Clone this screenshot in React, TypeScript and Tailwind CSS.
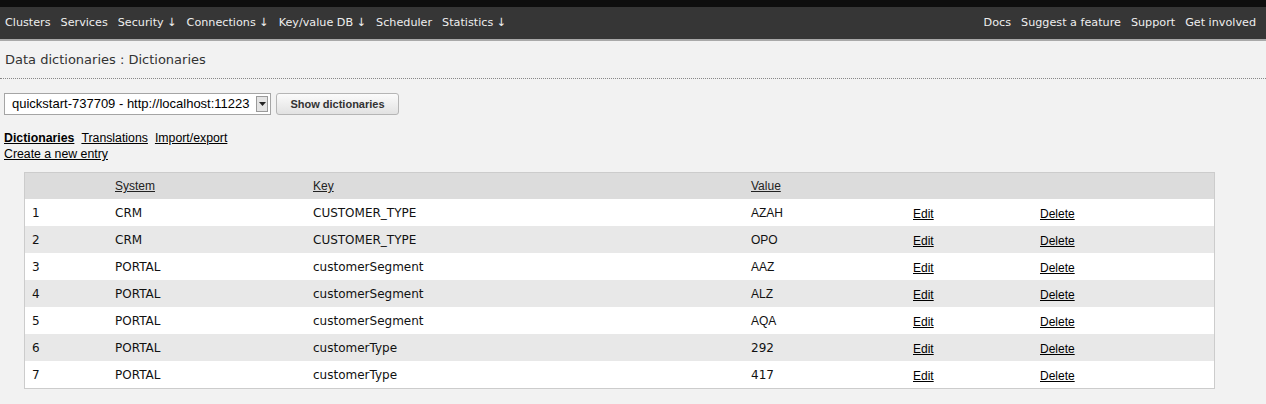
import React from "react";

const dv = { fontFamily: '"DejaVu Sans", sans-serif' };
const ar = { fontFamily: '"Liberation Sans", Arial, sans-serif' };

const rows: [string, string, string, string, boolean][] = [
  ["1", "CRM", "CUSTOMER_TYPE", "AZAH", false],
  ["2", "CRM", "CUSTOMER_TYPE", "OPO", false],
  ["3", "PORTAL", "customerSegment", "AAZ", false],
  ["4", "PORTAL", "customerSegment", "ALZ", false],
  ["5", "PORTAL", "customerSegment", "AQA", false],
  ["6", "PORTAL", "customerType", "292", true],
  ["7", "PORTAL", "customerType", "417", true],
];

export default function App() {
  const left = ["Clusters", "Services", "Security ↓", "Connections ↓", "Key/value DB ↓", "Scheduler", "Statistics ↓"];
  const right = ["Docs", "Suggest a feature", "Support", "Get involved"];
  return (
    <div className="w-[1266px] h-[404px] bg-[#f2f2f2] overflow-hidden text-[#111]">
      <div className="h-[7px] bg-[#0e0e0e]" />
      <div className="h-[34px] bg-[#363636] border-b-2 border-[#a9a9a9] flex items-center justify-between px-[5px] pt-[1px] text-[11.2px] text-[#eeeeee]" style={dv}>
        <div className="flex gap-[10px]">
          {left.map((t) => (
            <span key={t}>{t}</span>
          ))}
        </div>
        <div className="flex gap-[10px] pr-[5px]">
          {right.map((t) => (
            <span key={t}>{t}</span>
          ))}
        </div>
      </div>
      <div className="h-[37px] flex items-center px-[5px] text-[13px] text-[#333]" style={dv}>
        Data dictionaries : Dictionaries
      </div>
      <div className="border-t border-dotted border-[#888] h-0" />
      <div className="flex items-center gap-[5px] pl-[4px] mt-[14px]">
        <div className="w-[267px] h-[22px] bg-white border border-[#a5a5a5] flex items-center justify-between pl-[7px] pr-[2px] text-[13px] text-black" style={ar}>
          <span>quickstart-737709 - http://localhost:11223</span>
          <div className="w-[12px] h-[16px] bg-[#e4e4e4] border border-[#9a9a9a] flex items-center justify-center">
            <svg width="7" height="4" viewBox="0 0 7 4"><path d="M0 0h7L3.5 4z" fill="#222" /></svg>
          </div>
        </div>
        <button className="w-[123px] h-[22px] rounded-[3px] border border-[#b5b5b5] bg-gradient-to-b from-[#fbfbfb] to-[#e2e2e2] text-[11px] font-bold text-[#333]" style={ar}>
          Show dictionaries
        </button>
      </div>
      <div className="pl-[4px] mt-[15px] text-[12.3px] leading-[16px]" style={ar}>
        <div className="flex gap-[7px]">
          <span className="underline font-bold text-black">Dictionaries</span>
          <span className="underline text-black">Translations</span>
          <span className="underline text-black">Import/export</span>
        </div>
        <div className="underline text-black">Create a new entry</div>
      </div>
      <div className="ml-[24px] mt-[10px] w-[1191px] border border-[#cccccc]">
        <div className="grid grid-cols-[83px_198px_438px_162px_127px_1fr] h-[26px] bg-[#dcdcdc] items-center text-[12px] text-[#222]" style={ar}>
          <div />
          <div className="pl-[7px] underline">System</div>
          <div className="pl-[7px] underline">Key</div>
          <div className="pl-[7px] underline">Value</div>
          <div />
          <div />
        </div>
        {rows.map(([n, s, k, v, num], i) => (
          <div
            key={n}
            className={`grid grid-cols-[83px_198px_438px_162px_127px_1fr] h-[27px] items-center text-[12px] text-[#111] ${i % 2 === 0 ? "bg-white" : "bg-[#e8e8e8]"}`}
          >
            <div className="pl-[7px]" style={dv}>{n}</div>
            <div className="pl-[7px]" style={dv}>{s}</div>
            <div className="pl-[7px]" style={dv}>{k}</div>
            <div className="pl-[7px]" style={num ? dv : ar}>{v}</div>
            <div className="pl-[7px] pt-[2px] underline text-black" style={ar}>Edit</div>
            <div className="pl-[7px] pt-[2px] underline text-black" style={ar}>Delete</div>
          </div>
        ))}
      </div>
    </div>
  );
}
